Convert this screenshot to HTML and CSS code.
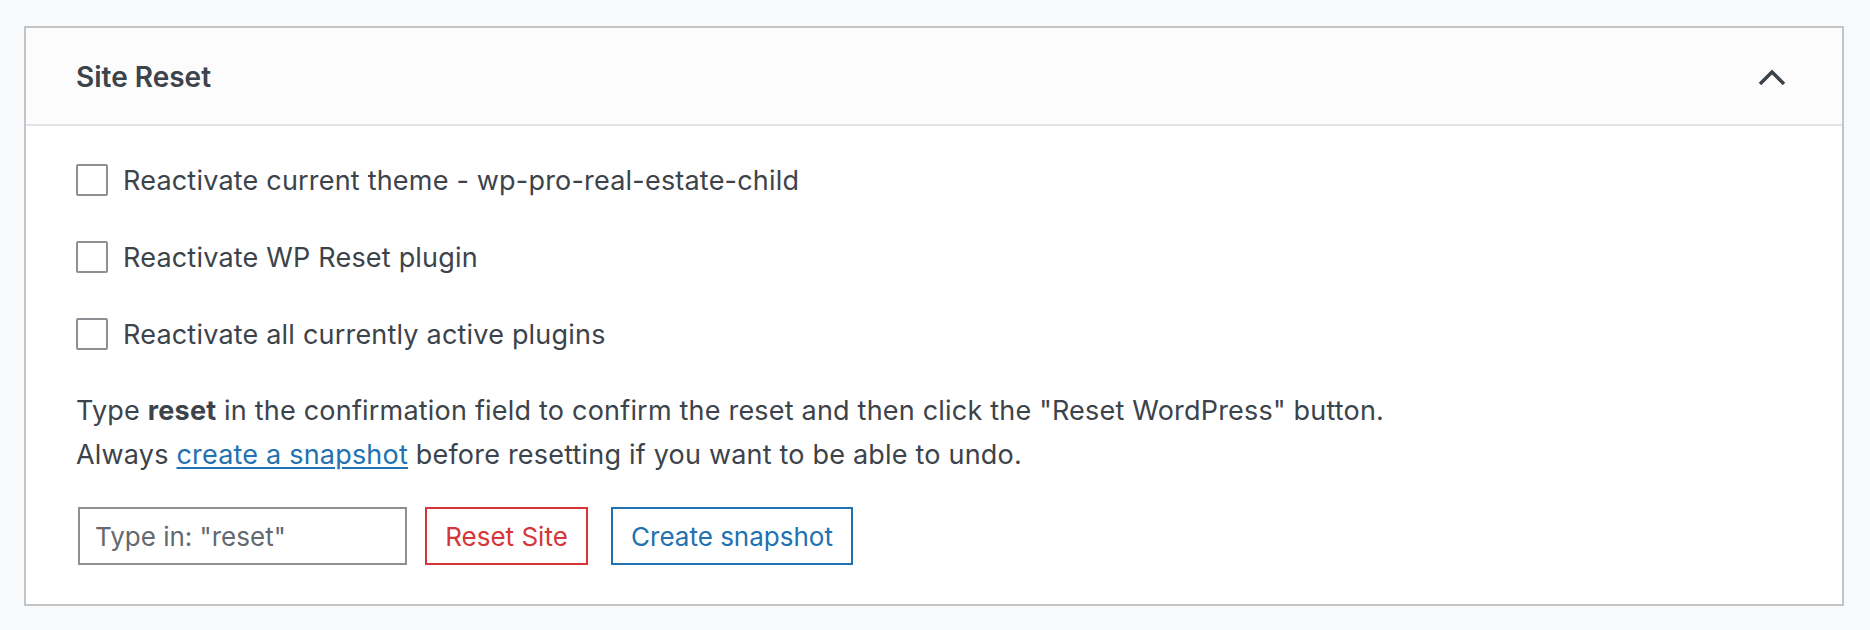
FILE: index.html
```html
<!DOCTYPE html>
<html>
<head>
<meta charset="utf-8">
<link rel="stylesheet" href="styles.css">
</head>
<body>
<div class="card">
  <div class="card-header">
    <h2 class="card-title">Site Reset</h2>
    <svg class="chevron" width="28" height="18" viewBox="0 0 28 18"><path d="M2 15 L14 3 L26 15" fill="none" stroke="#3c434a" stroke-width="3.5"/></svg>
  </div>
  <div class="card-body">
    <div class="options">
      <label class="option"><input type="checkbox" class="cb"><span>Reactivate current theme - wp-pro-real-estate-child</span></label>
      <label class="option"><input type="checkbox" class="cb"><span>Reactivate WP Reset plugin</span></label>
      <label class="option"><input type="checkbox" class="cb"><span>Reactivate all currently active plugins</span></label>
    </div>
    <p class="info">Type <b>reset</b> in the confirmation field to confirm the reset and then click the "Reset WordPress" button.<br>Always <a href="#" class="link">create a snapshot</a> before resetting if you want to be able to undo.</p>
    <div class="actions">
      <input type="text" class="confirm" placeholder="Type in: &quot;reset&quot;">
      <button class="btn btn-red">Reset Site</button>
      <button class="btn btn-blue">Create snapshot</button>
    </div>
  </div>
</div>
</body>
</html>
```
FILE: styles.css
```css
html, body { margin: 0; }
body {
  background: #f8f9fa;
  padding: 26px 26px 0 24px;
  font-family: Inter, "Liberation Sans", sans-serif;
  color: #3c434a;
}
.card {
  border: 2px solid #c3c4c7;
  background: #fff;
  height: 580px;
  box-sizing: border-box;
}
.card-header {
  height: 96px;
  background: #fcfcfc;
  border-bottom: 2px solid #e2e3e5;
  display: flex;
  align-items: center;
  justify-content: space-between;
  padding: 0 56px 0 50px;
}
.card-title {
  margin: 0;
  font-size: 28px;
  font-weight: 600;
  color: #3c434a;
  padding-top: 2px;
}
.chevron { display: block; margin-top: 4px; }
.card-body {
  padding: 38px 50px 0 50px;
}
.options {
  display: flex;
  flex-direction: column;
  gap: 45px;
}
.option {
  display: flex;
  align-items: center;
  height: 32px;
  font-size: 27px;
  letter-spacing: 0.2px;
  gap: 15px;
}
.cb {
  appearance: none;
  -webkit-appearance: none;
  margin: 0;
  width: 32px;
  height: 32px;
  border: 2px solid #8c8f94;
  border-radius: 2px;
  background: #fff;
  box-sizing: border-box;
  flex: none;
}
.info {
  margin: 39px 0 0 0;
  font-size: 27px;
  letter-spacing: 0.2px;
  line-height: 44px;
}
.info b { font-weight: 700; }
.link { color: #2271b1; text-decoration: underline; text-underline-offset: 3px; }
.actions {
  display: flex;
  margin-top: 30px;
  height: 58px;
}
.confirm {
  width: 329px;
  height: 58px;
  box-sizing: border-box;
  border: 2px solid #8c8f94;
  border-radius: 0;
  padding: 0 15px;
  font-family: Inter, "Liberation Sans", sans-serif;
  font-size: 26px;
  color: #3c434a;
  margin: 0 0 0 2px;
}
.confirm::placeholder { color: #646970; }
.btn {
  height: 58px;
  box-sizing: border-box;
  background: #fff;
  font-family: Inter, "Liberation Sans", sans-serif;
  font-size: 26px;
  border-radius: 0;
  margin: 0;
  padding: 0;
}
.btn-red { border: 2px solid #d63638; color: #d63638; width: 163px; margin-left: 18px; }
.btn-blue { border: 2px solid #2271b1; color: #2271b1; width: 242px; margin-left: 23px; }
```
